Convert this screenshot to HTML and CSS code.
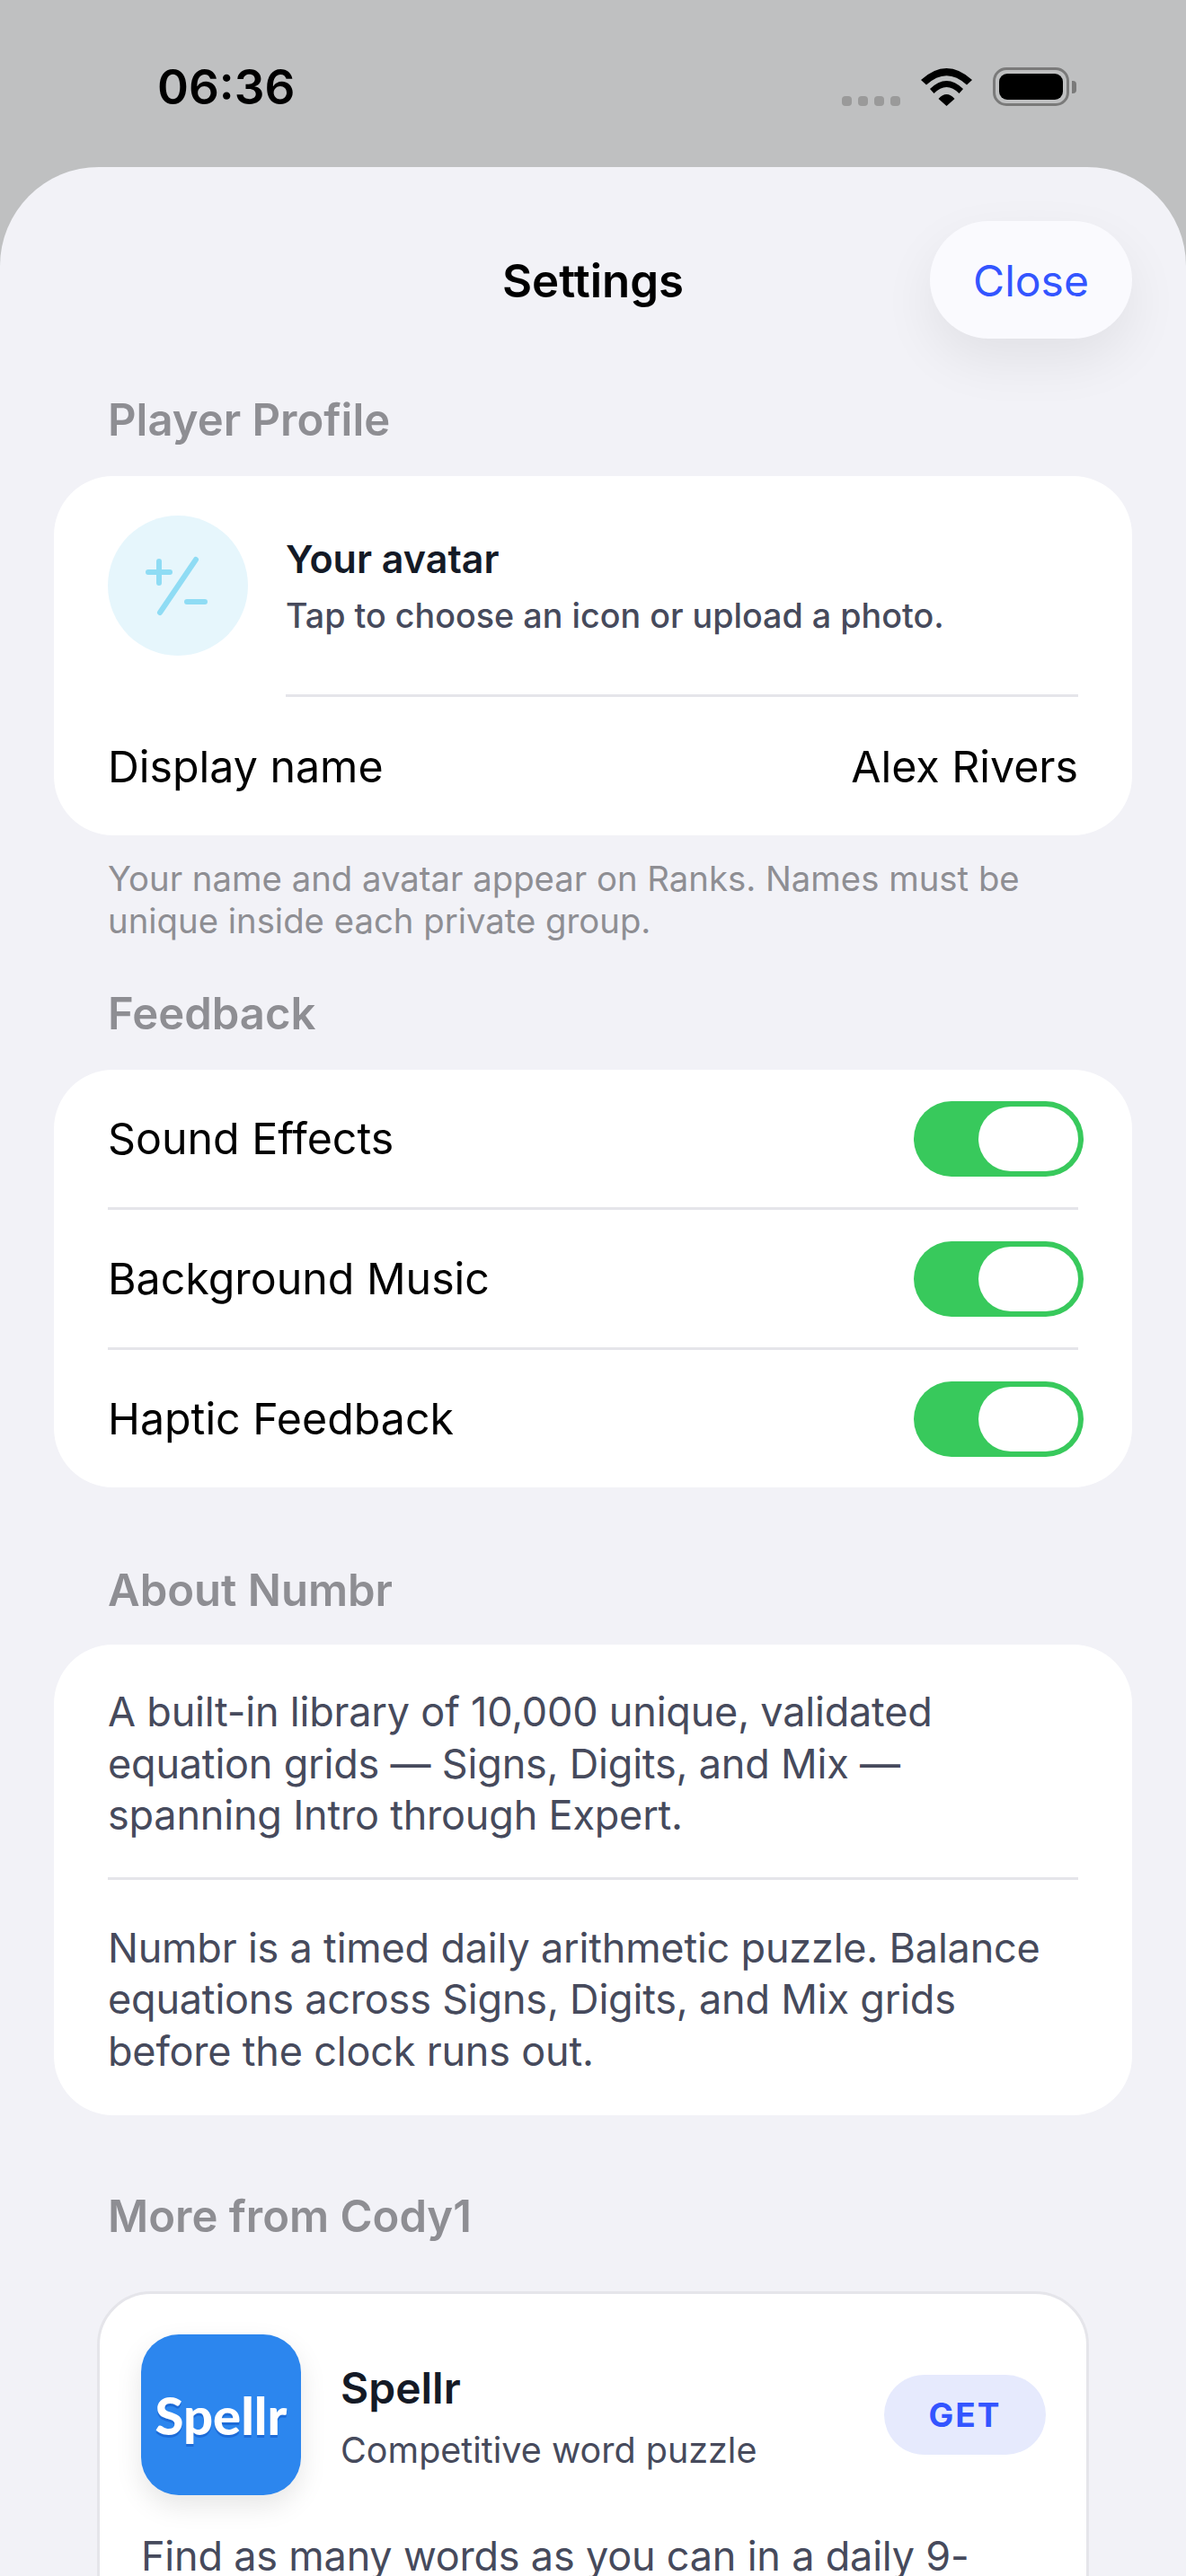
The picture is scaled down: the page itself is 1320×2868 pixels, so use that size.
FILE: index.html
```html
<!DOCTYPE html>
<html lang="en">
<head>
    <meta charset="UTF-8">
    <meta name="viewport" content="width=device-width, initial-scale=1.0">
    <title>Settings</title>
    <link rel="stylesheet" href="styles.css">
</head>
<body>
    <div class="screen">
        <!-- status bar -->
        <div class="status">
            <span class="time">06:36</span>
            <div class="status-icons">
                <div class="dots"><i></i><i></i><i></i><i></i></div>
                <svg class="wifi" width="57" height="42" viewBox="0 0 57 42">
                    <path d="M0 13 Q28.5 -13 57 13 L51 18.500 Q28.500 -2 6 18.500 Z"/>
                    <path d="M10 23 Q28.500 5 47 23 L42.500 28 Q28.500 14 14.500 28 Z"/>
                    <path d="M19.500 34 Q28.500 24 37.500 34 L28.500 42 Z"/>
                </svg>
                <div class="battery"><div class="battery-fill"></div></div>
                <div class="battery-nub"></div>
            </div>
        </div>

        <div class="sheet">
            <div class="header">
                <span></span>
                <h1>Settings</h1>
                <button class="close">Close</button>
            </div>

            <h2 class="section-title">Player Profile</h2>
            <div class="card">
                <div class="avatar-row">
                    <div class="avatar">
                        <svg width="156" height="156" viewBox="0 0 156 156">
                            <path d="M45 63H69M57 51V75M98 49L58 108M88 96H108"/>
                        </svg>
                    </div>
                    <div class="avatar-text">
                        <div class="avatar-title">Your avatar</div>
                        <div class="avatar-sub">Tap to choose an icon or upload a photo.</div>
                    </div>
                </div>
                <div class="line line-indent"></div>
                <div class="row name-row">
                    <span>Display name</span>
                    <span>Alex Rivers</span>
                </div>
            </div>
            <p class="note">Your name and avatar appear on Ranks. Names must be unique inside each private group.</p>

            <h2 class="section-title feedback-title">Feedback</h2>
            <div class="card">
                <div class="row">
                    <span>Sound Effects</span>
                    <div class="toggle"><div class="thumb"></div></div>
                </div>
                <div class="line"></div>
                <div class="row">
                    <span>Background Music</span>
                    <div class="toggle"><div class="thumb"></div></div>
                </div>
                <div class="line"></div>
                <div class="row">
                    <span>Haptic Feedback</span>
                    <div class="toggle"><div class="thumb"></div></div>
                </div>
            </div>

            <h2 class="section-title about-title">About Numbr</h2>
            <div class="card about">
                <p>A built-in library of 10,000 unique, validated equation grids — Signs, Digits, and Mix — spanning Intro through Expert.</p>
                <div class="line"></div>
                <p>Numbr is a timed daily arithmetic puzzle. Balance equations across Signs, Digits, and Mix grids before the clock runs out.</p>
            </div>

            <h2 class="section-title more-title">More from Cody1</h2>
            <div class="app-card">
                <div class="app-top">
                    <div class="app-icon">Spellr</div>
                    <div class="app-info">
                        <div class="app-name">Spellr</div>
                        <div class="app-sub">Competitive word puzzle</div>
                    </div>
                    <button class="get">GET</button>
                </div>
                <p class="app-desc">Find as many words as you can in a daily 9-letter puzzle.</p>
            </div>
        </div>
    </div>
</body>
</html>
```

FILE: styles.css
```css
* {
    padding: 0;
    margin: 0;
    box-sizing: border-box;
}

html, body {
    height: 2868px;
    overflow: hidden;
}

body {
    font-family: Inter, "Liberation Sans", sans-serif;
    background: #bfc0c1;
}

.screen {
    width: 1320px;
    height: 2868px;
    overflow: hidden;
}

/* status bar */
.status {
    height: 186px;
    padding: 75px 122px 0 175px;
    display: flex;
    justify-content: space-between;
    align-items: flex-start;
}

.time {
    font-size: 53px;
    font-weight: 600;
    line-height: 44px;
    color: #000;
}

.status-icons {
    display: flex;
    align-items: flex-end;
    height: 43px;
}

.dots {
    display: flex;
    gap: 7px;
    margin-right: 23px;
}

.dots i {
    display: block;
    width: 11px;
    height: 11px;
    border-radius: 4px;
    background: #9a9a9a;
}

.wifi {
    fill: #000;
    margin-right: 23px;
}

.battery {
    width: 85px;
    height: 43px;
    border: 3px solid #7a7a7a;
    border-radius: 15px;
    padding: 4px;
}

.battery-fill {
    width: 100%;
    height: 100%;
    background: #000;
    border-radius: 9px;
}

.battery-nub {
    width: 5px;
    height: 14px;
    background: #7a7a7a;
    border-radius: 0 4px 4px 0;
    margin: 0 0 14px 3px;
}

/* sheet */
.sheet {
    height: 2682px;
    padding: 60px 60px 0;
    background: #f2f2f7;
    border-radius: 110px 110px 0 0;
    overflow: hidden;
}

.header {
    display: grid;
    grid-template-columns: 1fr auto 1fr;
    align-items: center;
    height: 131px;
}

.header h1 {
    font-size: 51px;
    font-weight: 600;
    color: #000;
    padding-top: 2px;
}

.close {
    justify-self: end;
    width: 225px;
    height: 131px;
    border: none;
    border-radius: 66px;
    background: #fafafe;
    color: #3355ff;
    font-family: inherit;
    font-size: 48px;
    padding-top: 2px;
    box-shadow: 0 24px 60px rgba(0, 0, 0, .07);
}

.section-title {
    font-size: 49px;
    font-weight: 600;
    color: #8e8e93;
    line-height: 60px;
    padding-left: 60px;
    margin: 61px 0 32px;
}

.feedback-title {
    margin-top: 0;
}

.about-title {
    margin: 85px 0 30px;
}

.more-title {
    margin: 83px 0 53px;
}

.card {
    background: #fff;
    border-radius: 66px;
    padding: 0 60px;
}

.row {
    height: 153px;
    display: flex;
    justify-content: space-between;
    align-items: center;
    font-size: 48.300px;
    color: #000;
}

.line {
    height: 3px;
    background: #e5e5ea;
}

.line-indent {
    margin-left: 198px;
}

.toggle {
    display: flex;
    justify-content: flex-end;
    width: 189px;
    height: 84px;
    padding: 6px;
    margin-right: -6px;
    border-radius: 42px;
    background: #38c95c;
}

.thumb {
    width: 111px;
    height: 72px;
    border-radius: 36px;
    background: #fff;
}

.avatar-row {
    display: flex;
    align-items: flex-start;
    height: 243px;
    padding-top: 44px;
    gap: 42px;
}

.avatar {
    width: 156px;
    height: 156px;
    border-radius: 50%;
    background: #e6f6fc;
}

.avatar svg {
    display: block;
    fill: none;
    stroke: #8fdcf4;
    stroke-width: 6;
    stroke-linecap: round;
}

.avatar-text {
    padding-top: 22px;
}

.avatar-title {
    font-size: 43px;
    font-weight: 600;
    line-height: 52px;
    color: #141a26;
}

.avatar-sub {
    font-size: 37.700px;
    font-weight: 500;
    line-height: 44px;
    margin-top: 15px;
    color: #464a5c;
}

.name-row {
    height: 154px;
}

.note {
    font-size: 38.300px;
    line-height: 47px;
    color: #8e8e93;
    padding: 25px 60px 0;
    margin-bottom: 50px;
}

.about {
    padding: 46px 60px 0;
    height: 524px;
}

.about p {
    font-size: 45px;
    line-height: 57.500px;
    letter-spacing: -.2px;
    color: #464a5c;
}

.about .line {
    margin: 40px 0 47px;
}

/* app card */
.app-card {
    margin: 0 48px;
    background: #fff;
    border: 3px solid #e5e5ea;
    border-radius: 60px;
    padding: 45px 45px 45px 46px;
    height: 600px;
}

.app-top {
    display: flex;
    align-items: center;
}

.app-icon {
    width: 178px;
    height: 179px;
    border-radius: 42px;
    background: #2c86ee;
    color: #fff;
    font-family: Lato, sans-serif;
    font-size: 58px;
    font-weight: 900;
    text-align: center;
    line-height: 179px;
    text-shadow: 0 3px 0 rgba(20, 90, 200, .6);
    box-shadow: 0 12px 30px rgba(0, 0, 0, .1);
}

.app-info {
    flex: 1;
    padding: 4px 0 0 44px;
}

.app-name {
    font-size: 48px;
    font-weight: 600;
    line-height: 60px;
    color: #141a26;
}

.app-sub {
    font-size: 39.500px;
    line-height: 50px;
    margin-top: 14px;
    color: #464a5c;
}

.get {
    width: 180px;
    height: 89px;
    border: none;
    border-radius: 45px;
    background: #e6eafd;
    color: #3355ff;
    font-family: inherit;
    font-size: 37px;
    font-weight: 700;
    letter-spacing: 2px;
}

.app-desc {
    font-size: 45px;
    line-height: 57.500px;
    letter-spacing: -.2px;
    color: #464a5c;
    margin-top: 39px;
}
```
